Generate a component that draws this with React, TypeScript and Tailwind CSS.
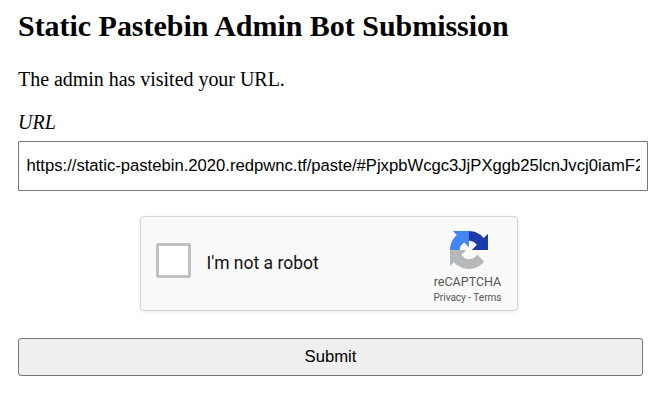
function RecaptchaLogo() {
  return (
    <svg className="ml-[2px] h-[38px] w-[38px]" viewBox="0 0 64 64" aria-hidden="true">
      <path fill="#1c3aa9" d="M64 31.955l-.033-1.37V4.687l-7.16 7.16C50.948 4.674 42.033.093 32.05.093c-10.4 0-19.622 4.96-25.458 12.64l11.736 11.86a15.55 15.55 0 0 1 4.754-5.334c2.05-1.6 4.952-2.906 8.968-2.906.485 0 .86.057 1.135.163 4.976.393 9.288 3.14 11.828 7.124l-8.307 8.307L64 31.953" />
      <path fill="#4285f4" d="M31.862.094l-1.37.033H4.594l7.16 7.16C4.58 13.147 0 22.06 0 32.046c0 10.4 4.96 19.622 12.64 25.458L24.5 45.768a15.55 15.55 0 0 1-5.334-4.754c-1.6-2.05-2.906-4.952-2.906-8.968 0-.485.057-.86.163-1.135.393-4.976 3.14-9.288 7.124-11.828l8.307 8.307L31.86.095" />
      <path fill="#b7b8b9" d="M.001 32.045l.033 1.37v25.898l7.16-7.16c5.86 7.173 14.774 11.754 24.76 11.754 10.4 0 19.622-4.96 25.458-12.64l-11.736-11.86a15.55 15.55 0 0 1-4.754 5.334c-2.05 1.6-4.952 2.906-8.968 2.906-.485 0-.86-.057-1.135-.163-4.976-.393-9.288-3.14-11.828-7.124l8.307-8.307c-10.522.04-22.4.066-27.295-.005" />
    </svg>
  );
}

function Recaptcha() {
  return (
    <div className="ml-[122px] mt-[25px] flex h-[95px] w-[378px] rounded-[4px] border border-[#d3d3d3] bg-[#f9f9f9] font-['Roboto',sans-serif] shadow-[0_1px_4px_rgba(0,0,0,0.08)]">
      <div className="flex flex-1 items-start pl-[15px] pt-[26px]">
        <span className="h-[35px] w-[35px] rounded-[2px] border-[3px] border-[#c1c1c1] bg-white" />
        <span className="ml-[15.5px] mt-[10px] text-[17.5px] leading-[20px] text-[#111]">I'm not a robot</span>
      </div>
      <div className="mr-[11.5px] flex w-[76px] flex-col items-center pt-[14px] text-[#555]">
        <RecaptchaLogo />
        <span className="mt-[5px] text-[12.5px] leading-[16px]">reCAPTCHA</span>
        <span className="mt-[2px] whitespace-nowrap text-[10px] leading-[12px]">Privacy - Terms</span>
      </div>
    </div>
  );
}

export default function App() {
  return (
    <main className="h-[407px] w-[672px] overflow-hidden bg-white pl-[18px] pt-[9px] text-black">
      <h2 className="font-['Liberation_Serif',serif] text-[30px] font-bold leading-[34px] tracking-[-0.03px]">Static Pastebin Admin Bot Submission</h2>
      <p className="mt-[25px] font-['Liberation_Serif',serif] text-[20px] leading-[23px] tracking-[-0.03px]">The admin has visited your URL.</p>
      <form className="w-[625px]">
        <label htmlFor="url" className="mt-[20px] block font-['Liberation_Serif',serif] text-[20px] italic leading-[23px]">URL</label>
        <input
          id="url"
          className="mt-[7px] block h-[50px] w-[630px] max-w-none rounded-[1px] border border-[#767676] bg-white px-[7.5px] font-['Liberation_Sans',sans-serif] text-[16.667px] tracking-[-0.01px]"
          defaultValue="https://static-pastebin.2020.redpwnc.tf/paste/#PjxpbWcgc3JjPXggb25lcnJvcj0iamF2"
        />
        <Recaptcha />
        <button type="button" className="mt-[27px] block h-[38px] w-full rounded-[3px] border border-[#767676] bg-[#efefef] pb-[2px] font-['Liberation_Sans',sans-serif] text-[16.667px]">Submit</button>
      </form>
    </main>
  );
}
